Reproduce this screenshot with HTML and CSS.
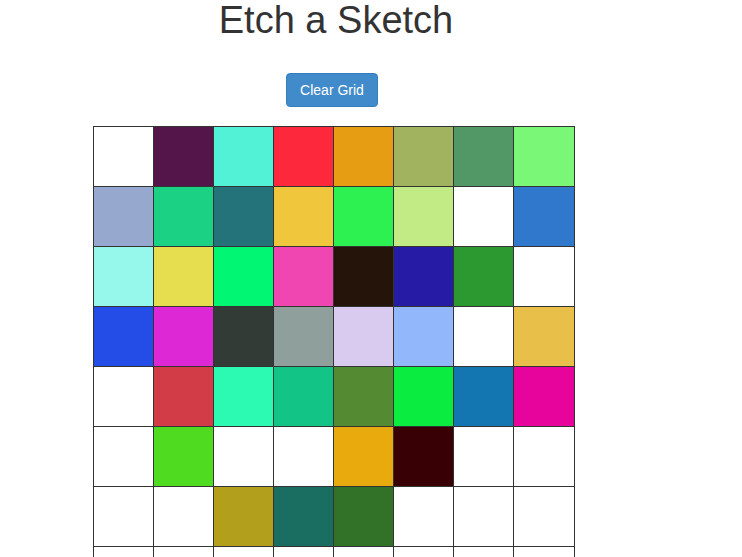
FILE: index.html
```html
<!DOCTYPE html>
<html>
<head>
<meta charset="utf-8">
<title>Etch a Sketch</title>
<link rel="stylesheet" href="styles.css">
</head>
<body>
<div class="page">
  <h1 class="title">Etch a Sketch</h1>
  <button class="btn-clear" type="button">Clear Grid</button>
  <div class="grid">
    <div class="cell"></div>
    <div class="cell" style="background:#54164a"></div>
    <div class="cell" style="background:#52f2d6"></div>
    <div class="cell" style="background:#fd283c"></div>
    <div class="cell" style="background:#e79d13"></div>
    <div class="cell" style="background:#a2b35f"></div>
    <div class="cell" style="background:#529867"></div>
    <div class="cell" style="background:#7bf777"></div>

    <div class="cell" style="background:#97a8cf"></div>
    <div class="cell" style="background:#1bd184"></div>
    <div class="cell" style="background:#25737a"></div>
    <div class="cell" style="background:#f0c63d"></div>
    <div class="cell" style="background:#2cf150"></div>
    <div class="cell" style="background:#c2eb86"></div>
    <div class="cell"></div>
    <div class="cell" style="background:#3078cb"></div>

    <div class="cell" style="background:#95f8eb"></div>
    <div class="cell" style="background:#e6de4f"></div>
    <div class="cell" style="background:#01f673"></div>
    <div class="cell" style="background:#f046b1"></div>
    <div class="cell" style="background:#24140a"></div>
    <div class="cell" style="background:#261ba4"></div>
    <div class="cell" style="background:#2b992f"></div>
    <div class="cell"></div>

    <div class="cell" style="background:#234de6"></div>
    <div class="cell" style="background:#dc28d5"></div>
    <div class="cell" style="background:#333b36"></div>
    <div class="cell" style="background:#8f9f9c"></div>
    <div class="cell" style="background:#d9caef"></div>
    <div class="cell" style="background:#92b7fb"></div>
    <div class="cell"></div>
    <div class="cell" style="background:#e8c049"></div>

    <div class="cell"></div>
    <div class="cell" style="background:#d23c46"></div>
    <div class="cell" style="background:#2cfab2"></div>
    <div class="cell" style="background:#12c587"></div>
    <div class="cell" style="background:#538a32"></div>
    <div class="cell" style="background:#0aed40"></div>
    <div class="cell" style="background:#1476b0"></div>
    <div class="cell" style="background:#e6049c"></div>

    <div class="cell"></div>
    <div class="cell" style="background:#4edb20"></div>
    <div class="cell"></div>
    <div class="cell"></div>
    <div class="cell" style="background:#e9aa0d"></div>
    <div class="cell" style="background:#380005"></div>
    <div class="cell"></div>
    <div class="cell"></div>

    <div class="cell"></div>
    <div class="cell"></div>
    <div class="cell" style="background:#b29f1b"></div>
    <div class="cell" style="background:#1a6e61"></div>
    <div class="cell" style="background:#327128"></div>
    <div class="cell"></div>
    <div class="cell"></div>
    <div class="cell"></div>

    <div class="cell"></div>
    <div class="cell"></div>
    <div class="cell"></div>
    <div class="cell"></div>
    <div class="cell"></div>
    <div class="cell"></div>
    <div class="cell"></div>
    <div class="cell"></div>
  </div>
</div>
</body>
</html>
```

FILE: styles.css
```css
html, body {
  margin: 0;
  padding: 0;
  background: #ffffff;
}

body {
  font-family: "Liberation Sans", Arial, Helvetica, sans-serif;
  color: #333333;
}

.page {
  width: 668px;
  display: flex;
  flex-direction: column;
  align-items: center;
}

.title {
  margin: 0;
  padding-left: 4px;
  font-size: 38px;
  font-weight: 400;
  line-height: 1.1;
  color: #333333;
}

.btn-clear {
  margin-top: 31px;
  margin-bottom: 19px;
  margin-right: 4px;
  padding: 6px 13px;
  font-family: "Liberation Sans", Arial, Helvetica, sans-serif;
  font-size: 14px;
  line-height: 20px;
  color: #ffffff;
  background: #428bca;
  border: 1px solid #357ebd;
  border-radius: 4px;
  cursor: pointer;
}

.grid {
  display: grid;
  grid-template-columns: repeat(7, 59px) 60px;
  grid-auto-rows: 59px;
  gap: 1px;
  padding: 1px;
  background: #333333;
}

.cell {
  background: #ffffff;
}
```
